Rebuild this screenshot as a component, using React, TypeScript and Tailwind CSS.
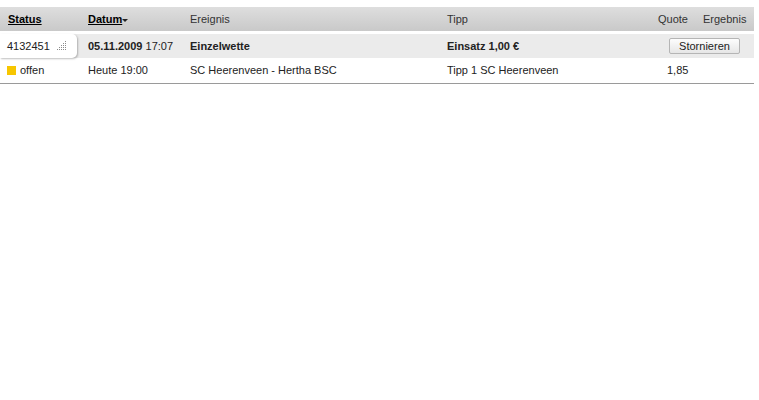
import React from "react";

function Grip() {
  const dots: [number, number][] = [
    [8, 0],
    [6, 2], [8, 2],
    [4, 4], [6, 4], [8, 4],
    [2, 6], [4, 6], [6, 6], [8, 6],
    [0, 8], [2, 8], [4, 8], [6, 8], [8, 8],
  ];
  return (
    <svg width="10" height="10" viewBox="0 0 10 10">
      {dots.map(([x, y], i) => (
        <rect key={i} x={x} y={y} width="1" height="1" fill="#8a8a8a" />
      ))}
    </svg>
  );
}

export default function App() {
  return (
    <div
      className="w-[759px] h-[400px] bg-white text-[11px] text-[#222]"
      style={{ fontFamily: '"Liberation Sans", Arial, sans-serif' }}
    >
      <div className="w-[754px] pt-[7px]">
        {/* header */}
        <div className="flex items-center h-[24px] bg-gradient-to-b from-[#dedede] to-[#c9c9c9] text-[#333]">
          <div className="w-[80px] pl-[8px] font-bold underline text-black">Status</div>
          <div className="w-[102px] pl-[8px] font-bold underline text-black flex items-center">
            Datum
            <svg width="6" height="4" viewBox="0 0 6 4" className="mt-[4px]">
              <path d="M0 0 L6 0 L3 3 Z" fill="#222" />
            </svg>
          </div>
          <div className="w-[257px] pl-[8px]">Ereignis</div>
          <div className="w-[211px] pl-[8px]">Tipp</div>
          <div className="w-[45px] pl-[8px]">Quote</div>
          <div className="flex-1 pl-[8px]">Ergebnis</div>
        </div>
        {/* row 1 */}
        <div className="mt-[3px] flex items-center h-[24px] bg-[#ebebeb]">
          <div className="w-[77px] h-full bg-white rounded-r-[5px] shadow-[1px_1px_2px_rgba(0,0,0,0.25)] flex items-center justify-between pl-[7px] pr-[10px]">
            <span>4132451</span>
            <Grip />
          </div>
          <div className="w-[3px]" />
          <div className="w-[102px] pl-[8px]">
            <span className="font-bold">05.11.2009</span> 17:07
          </div>
          <div className="w-[257px] pl-[8px] font-bold">Einzelwette</div>
          <div className="w-[230px] pl-[8px] font-bold">Einsatz 1,00 €</div>
          <div className="w-[71px] h-[16px] border border-[#b5b5b5] rounded-[2px] bg-gradient-to-b from-[#fdfdfd] to-[#e6e6e6] flex items-center justify-center text-[#222]">
            Stornieren
          </div>
        </div>
        {/* row 2 */}
        <div className="flex items-center h-[26px] border-b border-[#9a9a9a]">
          <div className="w-[80px] pl-[7px] flex items-center gap-[4px]">
            <span className="inline-block w-[9px] h-[9px] bg-[#f7c600]" />
            <span>offen</span>
          </div>
          <div className="w-[102px] pl-[8px]">Heute 19:00</div>
          <div className="w-[257px] pl-[8px]">SC Heerenveen - Hertha BSC</div>
          <div className="w-[211px] pl-[8px]">Tipp 1 SC Heerenveen</div>
          <div className="flex-1 pl-[17px]">1,85</div>
        </div>
      </div>
    </div>
  );
}
